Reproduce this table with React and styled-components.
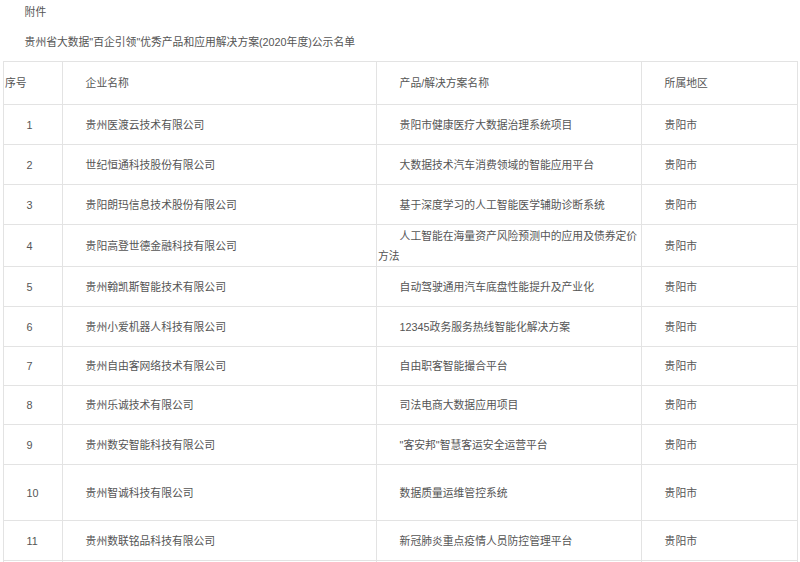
import React from "react";
import styled, { createGlobalStyle } from "styled-components";

const rows = [
  { no: "1", company: "贵州医渡云技术有限公司", product: "贵阳市健康医疗大数据治理系统项目", area: "贵阳市" },
  { no: "2", company: "世纪恒通科技股份有限公司", product: "大数据技术汽车消费领域的智能应用平台", area: "贵阳市" },
  { no: "3", company: "贵阳朗玛信息技术股份有限公司", product: "基于深度学习的人工智能医学辅助诊断系统", area: "贵阳市" },
  { no: "4", company: "贵阳高登世德金融科技有限公司", product: "人工智能在海量资产风险预测中的应用及债券定价方法", area: "贵阳市", height: 42 },
  { no: "5", company: "贵州翰凯斯智能技术有限公司", product: "自动驾驶通用汽车底盘性能提升及产业化", area: "贵阳市" },
  { no: "6", company: "贵州小爱机器人科技有限公司", product: "12345政务服务热线智能化解决方案", area: "贵阳市" },
  { no: "7", company: "贵州自由客网络技术有限公司", product: "自由职客智能撮合平台", area: "贵阳市", height: 39 },
  { no: "8", company: "贵州乐诚技术有限公司", product: "司法电商大数据应用项目", area: "贵阳市", height: 39 },
  { no: "9", company: "贵州数安智能科技有限公司", product: "\"客安邦\"智慧客运安全运营平台", area: "贵阳市" },
  { no: "10", company: "贵州智诚科技有限公司", product: "数据质量运维管控系统", area: "贵阳市", height: 56 },
  { no: "11", company: "贵州数联铭品科技有限公司", product: "新冠肺炎重点疫情人员防控管理平台", area: "贵阳市" },
];

const GlobalStyle = createGlobalStyle`
  html, body {
    margin: 0;
    padding: 0;
    background: #ffffff;
  }
  body {
    font-family: "Liberation Sans", "Noto Sans CJK SC", sans-serif;
    color: #555555;
  }
`;

const Page = styled.div`
  padding: 2px 3px 0 3px;
  font-size: 10.8px;
`;

const Para = styled.p`
  margin: 0 0 10px 0;
  line-height: 20px;
  text-indent: 2em;
`;

const Table = styled.table`
  margin-top: -1px;
  width: 794px;
  border-collapse: collapse;
  table-layout: fixed;
`;

const Row = styled.tr`
  height: ${(p) => p.$h || 40}px;
`;

const Cell = styled.td`
  border: 1px solid #e3e3e3;
  padding: 0 1px;
  vertical-align: middle;
  line-height: 20px;
  text-indent: ${(p) => (p.$indent ? "2em" : "0")};
  color: #555555;
  font-weight: normal;
  text-align: left;
  overflow: hidden;
`;

const HeadCell = styled(Cell).attrs({ as: "th" })``;

const App = () => {
  return (
    <>
      <GlobalStyle />
      <Page>
        <Para>附件</Para>
        <Para>贵州省大数据"百企引领"优秀产品和应用解决方案(2020年度)公示名单</Para>
        <Table>
          <colgroup>
            <col style={{ width: 59 }} />
            <col style={{ width: 314 }} />
            <col style={{ width: 265 }} />
            <col style={{ width: 156 }} />
          </colgroup>
          <thead>
            <Row $h={43}>
              <HeadCell>序号</HeadCell>
              <HeadCell $indent>企业名称</HeadCell>
              <HeadCell $indent>产品/解决方案名称</HeadCell>
              <HeadCell $indent>所属地区</HeadCell>
            </Row>
          </thead>
          <tbody>
            {rows.map((r) => (
              <Row key={r.no} $h={r.height}>
                <Cell $indent>{r.no}</Cell>
                <Cell $indent>{r.company}</Cell>
                <Cell $indent>{r.product}</Cell>
                <Cell $indent>{r.area}</Cell>
              </Row>
            ))}
            <Row>
              <Cell />
              <Cell />
              <Cell />
              <Cell />
            </Row>
          </tbody>
        </Table>
      </Page>
    </>
  );
};

export default App;
